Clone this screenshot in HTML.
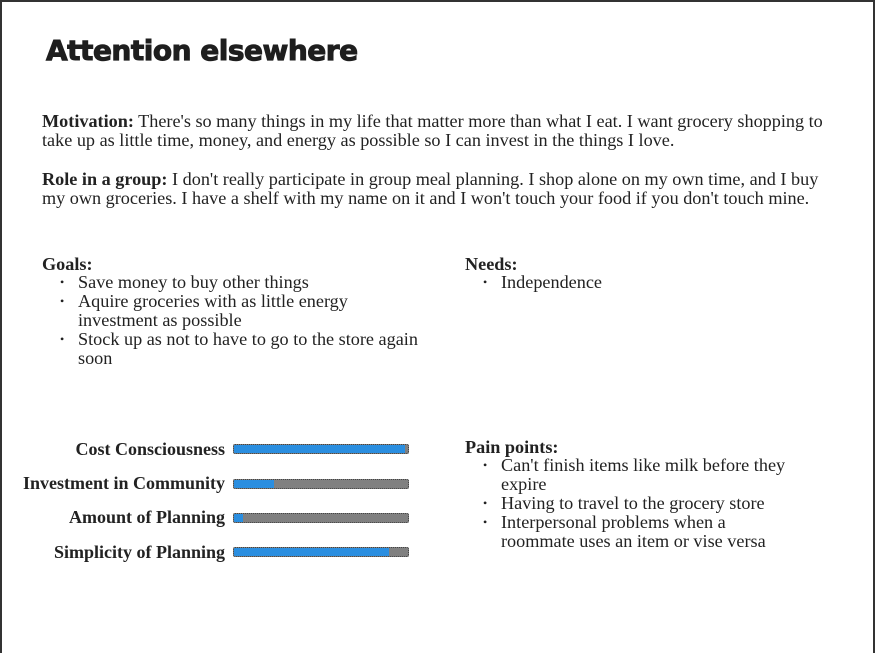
<!DOCTYPE html>
<html><head><style>
html,body{margin:0;width:875px;height:653px;overflow:hidden;background:#fff;position:relative;}
.frame{position:absolute;left:0;top:0;width:871px;height:651px;border:2px solid #333;border-bottom:none;}
*{font-family:"Liberation Serif",serif;color:#222;}
.t{position:absolute;left:46px;top:34px;font-family:"DejaVu Sans",sans-serif;font-weight:bold;font-size:28px;letter-spacing:-0.5px;color:#1e1e1e;-webkit-text-stroke:1px #1e1e1e;}
p{position:absolute;left:42px;margin:0;font-size:18.2px;line-height:19px;width:800px;}
.h{position:absolute;font-size:18.2px;font-weight:bold;}
ul{position:absolute;margin:0;padding-left:36px;font-size:18.2px;line-height:19px;}
li{list-style:none;position:relative;}
li:before{content:"•";position:absolute;left:-18px;font-size:12px;}
.lab{position:absolute;right:650px;font-size:18px;font-weight:bold;}
.bar{position:absolute;left:233px;width:174px;height:8px;background:#808080;border:1px dotted #444;border-radius:2px;overflow:hidden;}
.bar i{display:block;height:100%;background:#2a8ee0;}
</style></head><body>
<div class="frame"></div>
<div class="t">Attention elsewhere</div>
<p style="top:112px"><b>Motivation:</b> There's so many things in my life that matter more than what I eat. I want grocery shopping to take up as little time, money, and energy as possible so I can invest in the things I love.</p>
<p style="top:170px;width:800px"><b>Role in a group:</b> I don't really participate in group meal planning. I shop alone on my own time, and I buy my own groceries. I have a shelf with my name on it and I won't touch your food if you don't touch mine.</p>
<div class="h" style="left:42px;top:254px">Goals:</div>
<ul style="left:42px;top:273px;width:350px"><li>Save money to buy other things</li><li>Aquire groceries with as little energy investment as possible</li><li>Stock up as not to have to go to the store again soon</li></ul>
<div class="h" style="left:465px;top:254px">Needs:</div>
<ul style="left:465px;top:273px"><li>Independence</li></ul>
<div class="h" style="left:465px;top:437px">Pain points:</div>
<ul style="left:465px;top:456px;width:300px"><li>Can't finish items like milk before they expire</li><li>Having to travel to the grocery store</li><li>Interpersonal problems when a roommate uses an item or vise versa</li></ul>
<div class="lab" style="top:439px">Cost Consciousness</div>
<div class="lab" style="top:473px">Investment in Community</div>
<div class="lab" style="top:507px">Amount of Planning</div>
<div class="lab" style="top:542px">Simplicity of Planning</div>
<div class="bar" style="top:444px"><i style="width:98%"></i></div>
<div class="bar" style="top:479px"><i style="width:23%"></i></div>
<div class="bar" style="top:513px"><i style="width:5%"></i></div>
<div class="bar" style="top:547px"><i style="width:89%"></i></div>
</body></html>
